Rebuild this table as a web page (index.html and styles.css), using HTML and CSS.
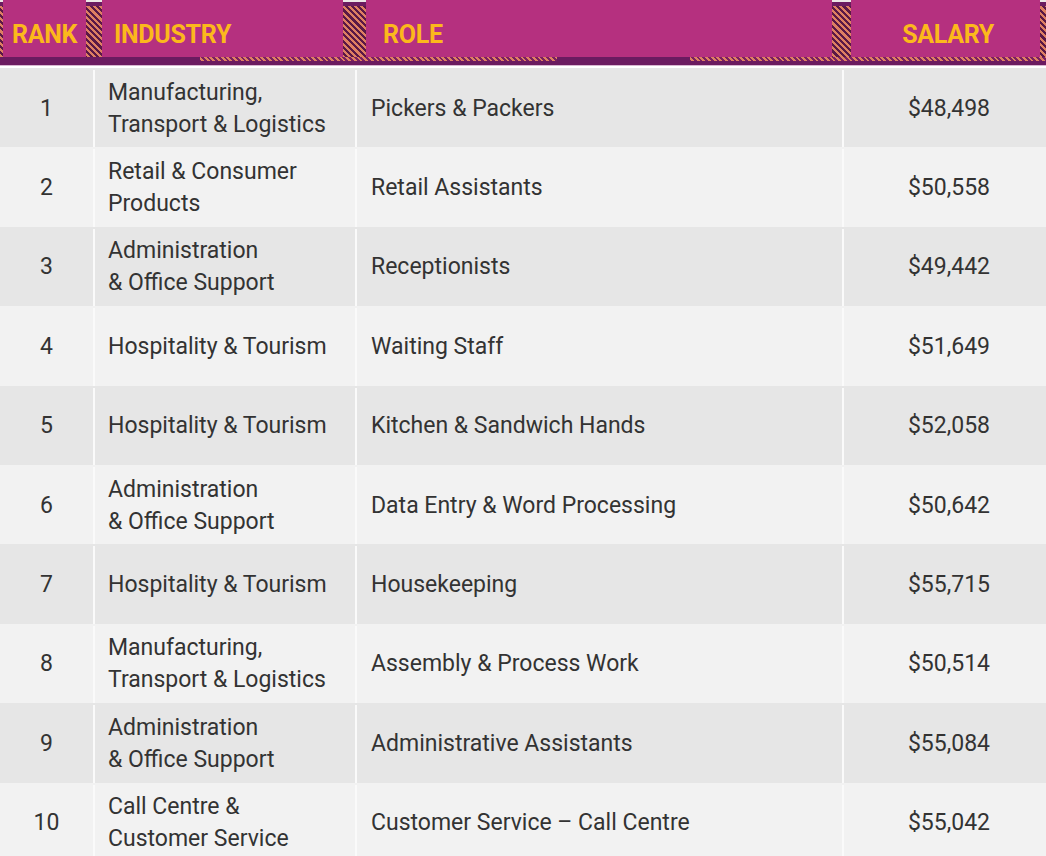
FILE: index.html
```html
<!DOCTYPE html>
<html lang="en">
<head>
<meta charset="utf-8">
<title>Top roles</title>
<link rel="stylesheet" href="styles.css">
</head>
<body>
<div class="page">
  <div class="head">
    <div class="hcell h-rank">RANK</div>
    <div class="hcell h-ind">INDUSTRY</div>
    <div class="hcell h-role">ROLE</div>
    <div class="hcell h-sal">SALARY</div>
  </div>
  <div class="band">
    <div class="seg seg-a"></div>
    <div class="seg seg-b hatch-top"></div>
    <div class="seg seg-c"></div>
    <div class="seg seg-d hatch-top"></div>
  </div>
  <div class="table">
    <div class="row odd"><div class="c rank">1</div><div class="c ind">Manufacturing,<br>Transport &amp; Logistics</div><div class="c role">Pickers &amp; Packers</div><div class="c sal">$48,498</div></div>
    <div class="row"><div class="c rank">2</div><div class="c ind">Retail &amp; Consumer<br>Products</div><div class="c role">Retail Assistants</div><div class="c sal">$50,558</div></div>
    <div class="row odd"><div class="c rank">3</div><div class="c ind">Administration<br>&amp; Office Support</div><div class="c role">Receptionists</div><div class="c sal">$49,442</div></div>
    <div class="row"><div class="c rank">4</div><div class="c ind">Hospitality &amp; Tourism</div><div class="c role">Waiting Staff</div><div class="c sal">$51,649</div></div>
    <div class="row odd"><div class="c rank">5</div><div class="c ind">Hospitality &amp; Tourism</div><div class="c role">Kitchen &amp; Sandwich Hands</div><div class="c sal">$52,058</div></div>
    <div class="row"><div class="c rank">6</div><div class="c ind">Administration<br>&amp; Office Support</div><div class="c role">Data Entry &amp; Word Processing</div><div class="c sal">$50,642</div></div>
    <div class="row odd"><div class="c rank">7</div><div class="c ind">Hospitality &amp; Tourism</div><div class="c role">Housekeeping</div><div class="c sal">$55,715</div></div>
    <div class="row"><div class="c rank">8</div><div class="c ind">Manufacturing,<br>Transport &amp; Logistics</div><div class="c role">Assembly &amp; Process Work</div><div class="c sal">$50,514</div></div>
    <div class="row odd"><div class="c rank">9</div><div class="c ind">Administration<br>&amp; Office Support</div><div class="c role">Administrative Assistants</div><div class="c sal">$55,084</div></div>
    <div class="row"><div class="c rank">10</div><div class="c ind">Call Centre &amp;<br>Customer Service</div><div class="c role">Customer Service – Call Centre</div><div class="c sal">$55,042</div></div>
  </div>
</div>
</body>
</html>
```
FILE: styles.css
```css
html, body {
  margin: 0;
  padding: 0;
  background: #ffffff;
}
.page {
  width: 1046px;
  font-family: Roboto, "Liberation Sans", sans-serif;
}
.head {
  display: flex;
  height: 57px;
  padding: 0 6px 0 3px;
  background:
    linear-gradient(to bottom, #ece6e6 0, #ece6e6 2px, #6b1b60 2px, #6b1b60 6px, transparent 6px),
    repeating-linear-gradient(45deg, #de7f62 0, #de7f62 2.2px, #5a1846 2.2px, #5a1846 4.4px);
}
.hcell {
  background: #b5307f;
  color: #fcb81c;
  font-weight: 700;
  font-size: 25px;
  display: flex;
  align-items: center;
  padding-top: 12px;
  box-sizing: border-box;
  letter-spacing: -0.3px;
}
.h-rank { width: 83px; padding-left: 9px; margin-right: 16px; }
.h-ind { width: 241px; padding-left: 12px; margin-right: 23px; }
.h-role { width: 466px; padding-left: 17px; margin-right: 19px; }
.h-sal { width: 189px; justify-content: flex-end; padding-right: 46px; }
.band {
  display: flex;
  height: 8px;
  background: #6b1b60;
  border-bottom: 1px solid #d7b6cf;
  margin-bottom: 2px;
}
.seg-a { width: 200px; }
.seg-b { width: 357px; }
.seg-c { width: 133px; }
.seg-d { flex: 1; }
.hatch-top {
  background:
    linear-gradient(to bottom, transparent 0, transparent 4px, #6b1b60 4px),
    repeating-linear-gradient(45deg, #de7f62 0, #de7f62 2px, #7a2060 2px, #7a2060 4px);
}
.row {
  display: grid;
  grid-template-columns: 93px 262px 487px 1fr;
  height: 79.4px;
  background: #f2f2f2;
  color: #333333;
  font-size: 23px;
  font-weight: 400;
  line-height: 32px;
  padding-top: 2px;
  box-sizing: border-box;
}
.row.odd { background: #e6e6e6; }
.c {
  display: flex;
  align-items: center;
  box-sizing: border-box;
}
.rank { justify-content: center; }
.ind { border-left: 2px solid #fafafa; padding-left: 13px; }
.role { border-left: 2px solid #fafafa; padding-left: 14px; }
.sal { border-left: 2px solid #fafafa; justify-content: flex-end; padding-right: 56px; }
```
